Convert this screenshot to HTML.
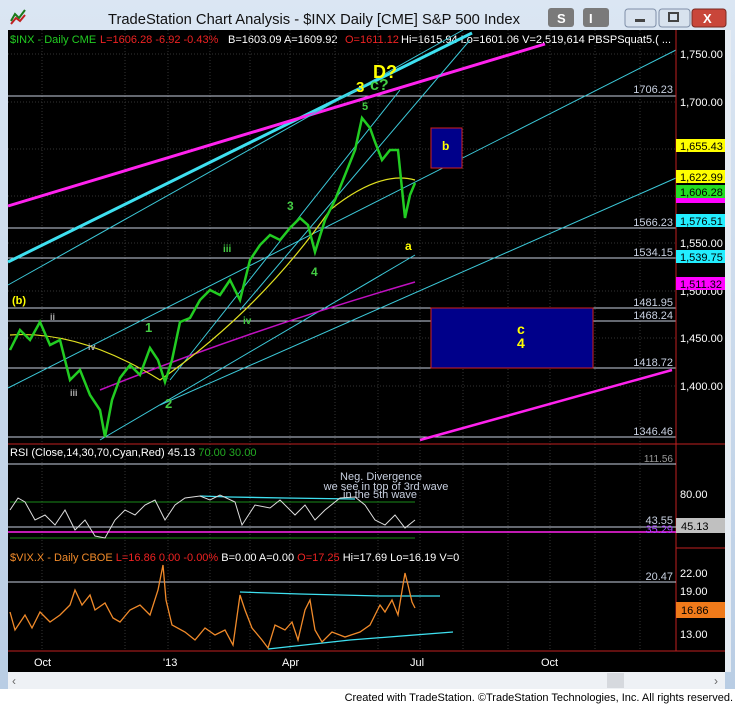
<!DOCTYPE html>
<html><head><meta charset="utf-8"><style>
body{margin:0;width:735px;height:704px;overflow:hidden;background:#fff;font-family:"Liberation Sans",sans-serif}
svg text{font-family:"Liberation Sans",sans-serif}
</style></head><body>
<svg width="735" height="704" xmlns="http://www.w3.org/2000/svg">
<defs><linearGradient id="tb" x1="0" y1="0" x2="0" y2="1"><stop offset="0" stop-color="#dbe6f3"/><stop offset="1" stop-color="#b9cde4"/></linearGradient></defs>
<rect width="735" height="689" fill="url(#tb)"/>
<text x="314" y="24" font-size="15" fill="#111" text-anchor="middle" textLength="412" lengthAdjust="spacingAndGlyphs">TradeStation Chart Analysis - $INX Daily [CME] S&amp;P 500 Index</text>
<path d="M11 21 L15 14 L19 18 L25 10" stroke="#1a7a1a" stroke-width="2" fill="none"/><path d="M11 24 L16 18 L20 21 L25 15" stroke="#c02020" stroke-width="2" fill="none"/>
<rect x="548" y="8" width="26" height="19" rx="3" fill="#7a7a7a"/><text x="557" y="23" font-size="13" fill="#fff" font-weight="bold">S</text>
<rect x="583" y="8" width="26" height="19" rx="3" fill="#7a7a7a"/><text x="589" y="23" font-size="13" fill="#fff" font-weight="bold">I</text>
<rect x="625" y="9" width="31" height="18" rx="3" fill="#d8e2ee" stroke="#7f8fa8"/><rect x="635" y="19" width="10" height="3" fill="#444"/>
<rect x="659" y="9" width="31" height="18" rx="3" fill="#d8e2ee" stroke="#7f8fa8"/><rect x="669" y="13" width="9" height="8" fill="none" stroke="#444" stroke-width="2"/>
<rect x="692" y="9" width="34" height="18" rx="3" fill="#c9463a" stroke="#7a2a22"/><text x="703" y="23" font-size="13" fill="#fff" font-weight="bold">X</text>
<rect x="8" y="30" width="717" height="642" fill="#000"/>
<rect x="725" y="30" width="6" height="642" fill="#e6ecf3"/>
<g font-size="11" textLength="0">
<text x="10" y="43" fill="#2c2">$INX - Daily  CME</text>
<text x="100" y="43" fill="#e22">L=1606.28  -6.92  -0.43%</text>
<text x="228" y="43" fill="#fff">B=1603.09  A=1609.92</text>
<text x="345" y="43" fill="#e22">O=1611.12</text>
<text x="401" y="43" fill="#fff">Hi=1615.94  Lo=1601.06  V=2,519,614  PBSPSquat5.( ...</text>
</g>
<!-- grid -->
<g stroke="#333" stroke-width="1" stroke-dasharray="1,2">
<line x1="8" y1="54" x2="676" y2="54"/><line x1="8" y1="102" x2="676" y2="102"/><line x1="8" y1="149" x2="676" y2="149"/><line x1="8" y1="196" x2="676" y2="196"/><line x1="8" y1="243" x2="676" y2="243"/><line x1="8" y1="291" x2="676" y2="291"/><line x1="8" y1="338" x2="676" y2="338"/><line x1="8" y1="386" x2="676" y2="386"/>
<line x1="42" y1="30" x2="42" y2="651"/><line x1="125" y1="30" x2="125" y2="651"/><line x1="168" y1="30" x2="168" y2="651"/><line x1="210" y1="30" x2="210" y2="651"/><line x1="250" y1="30" x2="250" y2="651"/><line x1="290" y1="30" x2="290" y2="651"/><line x1="335" y1="30" x2="335" y2="651"/><line x1="378" y1="30" x2="378" y2="651"/><line x1="420" y1="30" x2="420" y2="651"/><line x1="463" y1="30" x2="463" y2="651"/><line x1="508" y1="30" x2="508" y2="651"/><line x1="550" y1="30" x2="550" y2="651"/><line x1="595" y1="30" x2="595" y2="651"/><line x1="640" y1="30" x2="640" y2="651"/>
</g>
<!-- horizontal levels -->
<g stroke="#c8d0e0" stroke-width="1">
<line x1="8" y1="96" x2="676" y2="96"/><line x1="8" y1="228" x2="676" y2="228"/><line x1="8" y1="258" x2="676" y2="258"/><line x1="8" y1="308" x2="676" y2="308"/><line x1="8" y1="321" x2="676" y2="321"/><line x1="8" y1="368" x2="676" y2="368"/><line x1="8" y1="437" x2="676" y2="437"/>
</g>
<g font-size="11" fill="#c8d0e0" text-anchor="end">
<text x="673" y="93">1706.23</text><text x="673" y="226">1566.23</text><text x="673" y="256">1534.15</text><text x="673" y="306">1481.95</text><text x="673" y="319">1468.24</text><text x="673" y="366">1418.72</text><text x="673" y="435">1346.46</text>
</g>
<!-- channel lines -->
<line x1="8" y1="262" x2="472" y2="33" stroke="#3ee0f0" stroke-width="3"/>
<line x1="8" y1="206" x2="545" y2="44" stroke="#ff22ee" stroke-width="3"/>
<line x1="420" y1="440" x2="672" y2="370" stroke="#ff22ee" stroke-width="2.5"/>
<g stroke="#3cc8d8" stroke-width="1">
<line x1="8" y1="388" x2="676" y2="50"/><line x1="160" y1="405" x2="676" y2="178"/><line x1="8" y1="285" x2="463" y2="30"/><line x1="170" y1="380" x2="400" y2="90"/><line x1="240" y1="310" x2="470" y2="40"/><line x1="100" y1="440" x2="415" y2="255"/>
</g>
<path d="M100 390 Q250 330 415 282" stroke="#c010c0" stroke-width="1.5" fill="none"/>
<path d="M10 335 Q80 330 160 380 Q260 310 330 210 Q380 170 415 180" stroke="#e0e020" stroke-width="1.2" fill="none"/>
<polyline fill="none" stroke="#22cc22" stroke-width="2.5" points="10,350 20,330 30,340 40,322 50,345 60,340 70,380 80,370 90,395 100,410 105,437 112,400 120,378 130,365 140,375 150,348 158,360 165,382 172,360 180,322 190,318 200,300 210,290 220,295 230,280 240,300 250,260 260,245 270,235 280,240 290,228 300,218 308,225 315,252 325,220 335,200 345,175 355,150 362,118 370,128 375,142 382,160 390,150 398,150 405,218 410,195 415,183"/>
<!-- boxes -->
<rect x="431" y="128" width="31" height="40" fill="#00008a" stroke="#d02020"/>
<text x="442" y="150" font-size="12" fill="#ff0" font-weight="bold">b</text>
<rect x="431" y="308" width="162" height="60" fill="#00008a" stroke="#d02020"/>
<text x="517" y="334" font-size="14" fill="#ff0" font-weight="bold">c</text><text x="517" y="348" font-size="14" fill="#ff0" font-weight="bold">4</text>
<!-- labels -->
<g font-weight="bold">
<text x="373" y="78" font-size="18" fill="#ff0">D?</text>
<text x="356" y="92" font-size="15" fill="#ff0">3</text>
<text x="370" y="90" font-size="16" fill="#4c4">c?</text>
<text x="362" y="110" font-size="11" fill="#4c4">5</text>
<text x="12" y="304" font-size="11" fill="#ff0">(b)</text>
<text x="405" y="250" font-size="12" fill="#ff0">a</text>
<text x="145" y="332" font-size="13" fill="#4c4">1</text>
<text x="165" y="408" font-size="13" fill="#4c4">2</text>
<text x="287" y="210" font-size="12" fill="#4c4">3</text>
<text x="311" y="276" font-size="12" fill="#4c4">4</text>
<text x="223" y="252" font-size="10" fill="#4c4">iii</text>
<text x="243" y="324" font-size="10" fill="#4c4">iv</text>
<text x="50" y="320" font-size="9" fill="#aaa">ii</text><text x="88" y="350" font-size="9" fill="#aaa">iv</text><text x="70" y="396" font-size="9" fill="#aaa">iii</text>
</g>
<!-- price axis -->
<line x1="676" y1="30" x2="676" y2="651" stroke="#c02020"/>
<g font-size="11" fill="#fff">
<text x="680" y="58">1,750.00</text><text x="680" y="106">1,700.00</text><text x="680" y="247">1,550.00</text><text x="680" y="295">1,500.00</text><text x="680" y="342">1,450.00</text><text x="680" y="390">1,400.00</text>
</g>
<g font-size="11" fill="#000">
<rect x="676" y="139" width="49" height="13" fill="#ff0"/><text x="680" y="150">1,655.43</text>
<rect x="676" y="170" width="49" height="13" fill="#ff0"/><text x="680" y="181">1,622.99</text>
<rect x="676" y="198" width="49" height="5" fill="#f0f"/>
<rect x="676" y="185" width="49" height="13" fill="#2d2"/><text x="680" y="196">1,606.28</text>
<rect x="676" y="214" width="49" height="13" fill="#2ef"/><text x="680" y="225">1,576.51</text>
<rect x="676" y="250" width="49" height="13" fill="#2ef"/><text x="680" y="261">1,539.75</text>
<rect x="676" y="277" width="49" height="13" fill="#f0f"/><text x="680" y="288">1,511.32</text>
</g>
<line x1="8" y1="444" x2="725" y2="444" stroke="#c02020"/>
<!-- RSI -->
<text x="10" y="456" font-size="11" fill="#fff">RSI (Close,14,30,70,Cyan,Red)  <tspan>45.13</tspan> <tspan fill="#2a2">70.00  30.00</tspan></text>
<line x1="8" y1="464" x2="676" y2="464" stroke="#c8d0e0"/>
<line x1="8" y1="527" x2="676" y2="527" stroke="#c8d0e0"/>
<line x1="8" y1="532" x2="676" y2="532" stroke="#ff22ee" stroke-width="1.5"/>
<line x1="10" y1="502" x2="415" y2="502" stroke="#1a8a1a"/><line x1="10" y1="538" x2="415" y2="538" stroke="#1a8a1a"/>
<polyline fill="none" stroke="#3ee0f0" stroke-width="1.3" points="200,496 230,497 285,498 355,499"/>
<polyline fill="none" stroke="#ddd" stroke-width="1" points="10,510 18,498 25,502 35,520 45,515 55,525 65,510 75,530 85,520 95,536 105,538 115,520 125,510 135,515 145,505 155,500 165,520 175,505 185,498 200,496 210,500 220,495 235,502 242,525 255,505 270,508 280,500 295,515 305,505 315,520 325,510 340,498 355,497 365,505 375,520 385,525 395,515 405,528 415,520"/>
<g font-size="11" fill="#c8d0e0" text-anchor="middle"><text x="381" y="480">Neg. Divergence</text><text x="386" y="490">we see in top of 3rd wave</text><text x="380" y="498">in the 5th wave</text></g>
<text x="673" y="462" font-size="10" fill="#999" text-anchor="end">111.56</text>
<text x="673" y="524" font-size="11" fill="#c8d0e0" text-anchor="end">43.55</text>
<text x="673" y="533" font-size="11" fill="#a4f" text-anchor="end">35.29</text>
<text x="680" y="498" font-size="11" fill="#fff">80.00</text>
<rect x="676" y="518" width="49" height="15" fill="#c0c0c0"/><text x="681" y="530" font-size="11" fill="#000">45.13</text>
<line x1="676" y1="548" x2="725" y2="548" stroke="#c02020"/>
<!-- VIX -->
<text x="10" y="561" font-size="11" fill="#f08a2a">$VIX.X - Daily  CBOE  <tspan fill="#e22">L=16.86  0.00   -0.00%</tspan>  <tspan fill="#fff">B=0.00  A=0.00</tspan>  <tspan fill="#e22">O=17.25</tspan>  <tspan fill="#fff">Hi=17.69  Lo=16.19  V=0</tspan></text>
<line x1="8" y1="582" x2="676" y2="582" stroke="#c8d0e0"/>
<text x="673" y="580" font-size="11" fill="#c8d0e0" text-anchor="end">20.47</text>
<polyline fill="none" stroke="#3ee0f0" stroke-width="1.3" points="240,592 300,594 380,596 440,596"/>
<polyline fill="none" stroke="#3ee0f0" stroke-width="1.3" points="268,649 350,640 453,632"/>
<polyline fill="none" stroke="#f08a2a" stroke-width="1.3" points="10,612 15,630 25,615 32,628 40,612 50,622 60,615 70,605 75,590 82,605 90,595 95,610 105,603 113,618 120,622 130,610 140,605 150,615 158,590 163,565 166,600 172,625 185,632 195,640 205,628 215,635 225,630 233,645 240,595 245,610 252,628 262,640 268,648 275,625 285,630 292,622 298,640 305,610 310,600 315,630 322,642 332,632 345,637 360,632 370,625 380,605 385,612 392,600 398,615 405,573 408,585 412,602 415,608"/>
<g font-size="11" fill="#fff"><text x="680" y="577">22.00</text><text x="680" y="595">19.00</text><text x="680" y="638">13.00</text></g>
<rect x="676" y="602" width="49" height="16" fill="#f07a1a"/><text x="681" y="614" font-size="11" fill="#000">16.86</text>
<line x1="8" y1="651" x2="725" y2="651" stroke="#c02020"/>
<g font-size="11" fill="#fff"><text x="34" y="666">Oct</text><text x="163" y="666">'13</text><text x="282" y="666">Apr</text><text x="410" y="666">Jul</text><text x="541" y="666">Oct</text></g>
<!-- scrollbar -->
<rect x="8" y="672" width="717" height="17" fill="#eef1f5"/>
<rect x="607" y="673" width="17" height="15" fill="#d6d9de"/>
<text x="12" y="685" font-size="12" fill="#666">‹</text><text x="714" y="685" font-size="12" fill="#666">›</text>
<rect x="0" y="689" width="735" height="15" fill="#fff"/>
<text x="733" y="701" font-size="11" fill="#000" text-anchor="end">Created with TradeStation. ©TradeStation Technologies, Inc. All rights reserved.</text>
</svg>
</body></html>
